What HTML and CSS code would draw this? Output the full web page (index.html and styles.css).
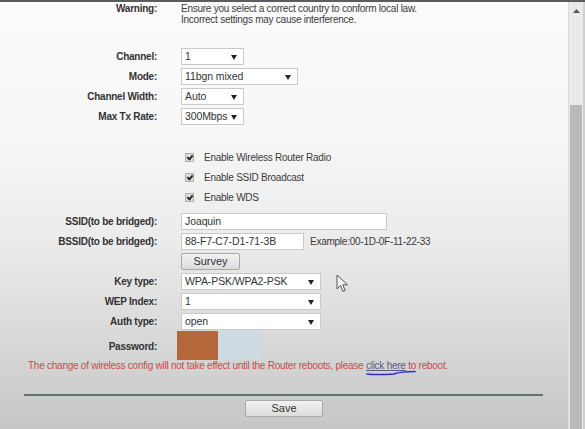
FILE: index.html
```html
<!DOCTYPE html>
<html>
<head>
<meta charset="utf-8">
<link rel="stylesheet" href="styles.css">
</head>
<body>
<div class="screen">
  <div class="main">
    <div class="row warn">
      <div class="label">Warning:</div>
      <div class="value text">Ensure you select a correct country to conform local law.<br>Incorrect settings may cause interference.</div>
    </div>
    <div class="group first">
      <div class="row"><div class="label">Channel:</div><div class="value"><div class="select w63">1<i class="arr"></i></div></div></div>
      <div class="row"><div class="label">Mode:</div><div class="value"><div class="select w117">11bgn mixed<i class="arr"></i></div></div></div>
      <div class="row"><div class="label">Channel Width:</div><div class="value"><div class="select w63">Auto<i class="arr"></i></div></div></div>
      <div class="row"><div class="label">Max Tx Rate:</div><div class="value"><div class="select w63">300Mbps<i class="arr"></i></div></div></div>
    </div>
    <div class="group checks">
      <div class="row"><div class="label"></div><div class="value check"><span class="cb"></span>Enable Wireless Router Radio</div></div>
      <div class="row"><div class="label"></div><div class="value check"><span class="cb"></span>Enable SSID Broadcast</div></div>
      <div class="row"><div class="label"></div><div class="value check"><span class="cb"></span>Enable WDS</div></div>
    </div>
    <div class="group fields">
      <div class="row"><div class="label">SSID(to be bridged):</div><div class="value"><div class="input w206">Joaquin</div></div></div>
      <div class="row"><div class="label">BSSID(to be bridged):</div><div class="value"><div class="input w123">88-F7-C7-D1-71-3B</div><span class="example">Example:00-1D-0F-11-22-33</span></div></div>
      <div class="row"><div class="label"></div><div class="value"><div class="btn survey">Survey</div></div></div>
      <div class="row"><div class="label">Key type:</div><div class="value"><div class="select w140">WPA-PSK/WPA2-PSK<i class="arr"></i></div></div></div>
      <div class="row"><div class="label">WEP Index:</div><div class="value"><div class="select w140">1<i class="arr"></i></div></div></div>
      <div class="row"><div class="label">Auth type:</div><div class="value"><div class="select w140">open<i class="arr"></i></div></div></div>
      <div class="row pw"><div class="label">Password:</div><div class="value"><span class="blk orange"></span><span class="blk blue"></span></div></div>
    </div>
    <p class="note">The change of wireless config will not take effect until the Router reboots, please <a class="link">click here<svg class="scribble" width="50" height="7" viewBox="0 0 50 7"><path d="M1 5 C10 6 20 5.5 28 5 C34 2.5 41 2.5 49 2.5" stroke="#2b2bd8" stroke-width="1.6" fill="none" stroke-linecap="round"/></svg></a> to reboot.</p>
    <hr class="rule">
    <div class="actions"><div class="btn save">Save</div></div>
    <svg class="cursor" width="14" height="19" viewBox="0 0 14 19"><path d="M1 1 L1 15 L4.5 11.5 L7 17.5 L9.2 16.5 L6.8 10.8 L11.5 10.8 Z" fill="#f4f4f4" stroke="#555" stroke-width="1"/></svg>
  </div>
  <div class="scrollbar">
    <div class="up"><svg width="7" height="4" viewBox="0 0 7 4"><path d="M0 4 L3.5 0 L7 4 Z" fill="#555"/></svg></div>
    <div class="track"></div>
    <div class="thumb"></div>
  </div>
  <div class="edge"></div>
</div>
</body>
</html>
```

FILE: styles.css
```css
html, body {
  margin: 0;
  padding: 0;
}
body {
  width: 585px;
  height: 429px;
  overflow: hidden;
  font-family: "Liberation Sans", Arial, sans-serif;
  font-size: 10px;
  letter-spacing: -0.25px;
  color: #3a3a3a;
}
.screen {
  display: flex;
  height: 429px;
  box-sizing: border-box;
  border-top: 2px solid #5c5c5c;
  background: linear-gradient(180deg, #fbfbfb 0%, #f7f7f7 30%, #ececec 55%, #dcdcdc 75%, #c6c6c6 100%);
}
.main {
  flex: 1;
  position: relative;
}
.row {
  display: grid;
  grid-template-columns: 157px 1fr;
  column-gap: 24px;
  align-items: center;
  height: 20px;
}
.label {
  text-align: right;
  font-weight: bold;
  color: #333;
}
.value {
  display: flex;
  align-items: center;
}
.warn {
  height: auto;
  align-items: start;
  line-height: 11px;
  padding-top: 1px;
}
.text { display: block; color: #3a3a3a; }
.group.first { margin-top: 21px; }
.group.checks { margin-top: 21px; }
.group.fields { margin-top: 4px; }

.select, .input {
  box-sizing: border-box;
  height: 17px;
  background: #fff;
  border: 1px solid #c9c9c9;
  padding: 0 3px;
  font-size: 10.5px;
  letter-spacing: -0.1px;
  line-height: 15px;
  color: #333;
  position: relative;
}
.select .arr {
  position: absolute;
  right: 6px;
  top: 6px;
  width: 0;
  height: 0;
  border-left: 3px solid transparent;
  border-right: 3px solid transparent;
  border-top: 5px solid #222;
}
.w63 { width: 63px; }
.w117 { width: 117px; }
.w140 { width: 140px; }
.w206 { width: 206px; }
.w123 { width: 123px; }
.example { margin-left: 6px; color: #3a3a3a; }

.check { color: #3a3a3a; }
.cb {
  box-sizing: border-box;
  width: 9px;
  height: 9px;
  margin-left: 4px;
  margin-right: 10px;
  border: 1px solid #b0b0b0;
  background: #dedede;
  position: relative;
}
.cb::after {
  content: "";
  position: absolute;
  left: 2px;
  top: 0px;
  width: 2px;
  height: 4px;
  border-right: 2px solid #2a2a2a;
  border-bottom: 2px solid #2a2a2a;
  transform: rotate(40deg);
}

.btn {
  box-sizing: border-box;
  height: 17px;
  border: 1px solid #a8a8a8;
  border-radius: 2px;
  background: linear-gradient(#f2f2f2, #dcdcdc);
  text-align: center;
  line-height: 15px;
  font-size: 11px;
  letter-spacing: 0;
  color: #333;
}
.survey { width: 59px; margin-top: 1px; }

.pw { height: 29px; }
.pw .label { padding-top: 1px; }
.blk {
  display: block;
  width: 41px;
  height: 29px;
}
.orange { background: #b5673a; margin-left: -4px; }
.blue { background: #cfdbe3; width: 42px; }

.note {
  margin: 0;
  padding-left: 28px;
  height: 11px;
  line-height: 11px;
  color: #d0474c;
  white-space: nowrap;
}
.link {
  color: #5b5a83;
  text-decoration: underline;
  position: relative;
}
.scribble {
  position: absolute;
  left: 0;
  top: 9px;
}
.rule {
  margin: 23px 25px 0 24px;
  border: 0;
  border-top: 2px solid #5f7670;
  height: 0;
}
.actions {
  display: flex;
  justify-content: center;
  margin-top: 4px;
}
.save { width: 78px; }
.cursor {
  position: absolute;
  left: 336px;
  top: 272px;
}

.scrollbar {
  width: 14px;
  display: flex;
  flex-direction: column;
  background: #e9e9e9;
  border-left: 1px solid #dadada;
}
.up {
  height: 14px;
  display: flex;
  justify-content: center;
  align-items: center;
  margin-top: 2px;
}
.track { height: 87px; }
.thumb {
  flex: 1;
  background: #b9b9b9;
  margin: 0 1px;
}
.edge {
  width: 2px;
  background: #cfcfcf;
}
```
